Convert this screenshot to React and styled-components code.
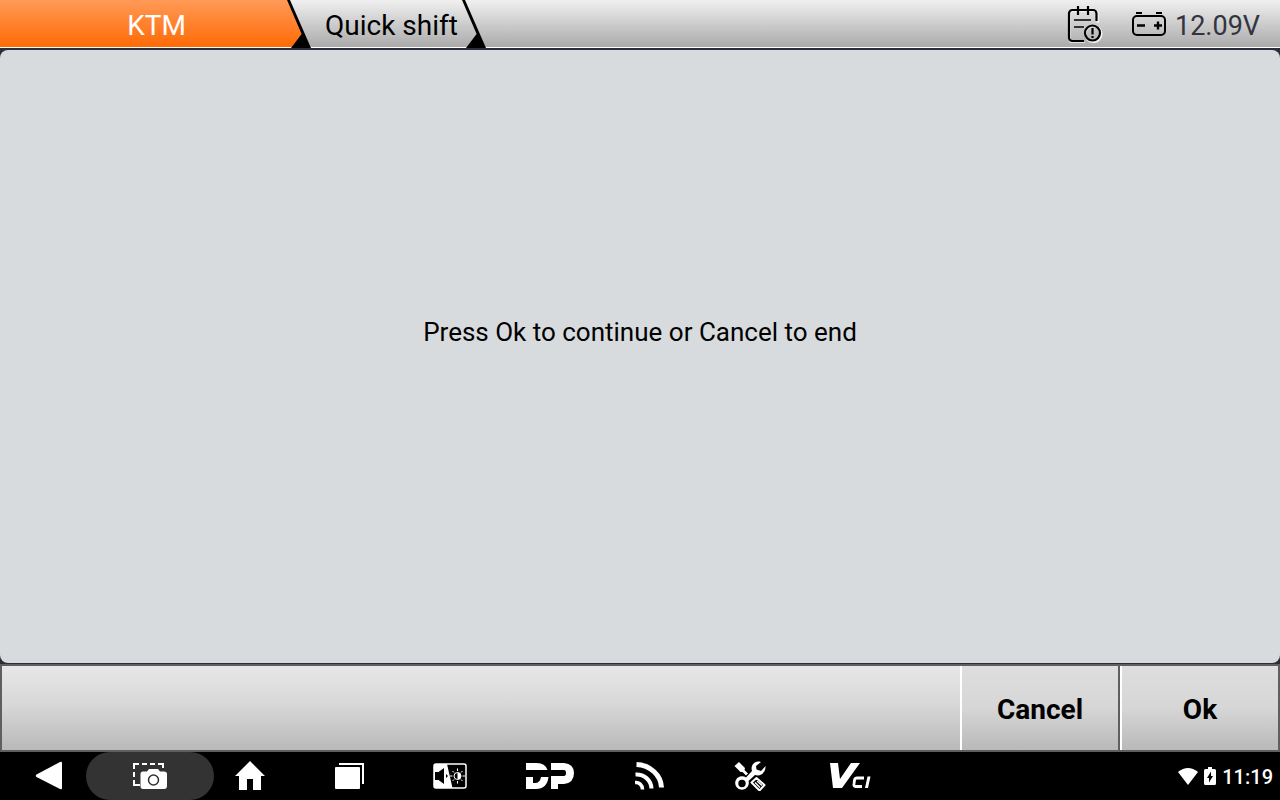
import React, { useState } from 'react'
import styled, { createGlobalStyle, css } from 'styled-components'

const GlobalStyle = createGlobalStyle`
    * {
        box-sizing: border-box;
    }
    body {
        margin: 0;
        background: #2b2d3a;
        font-family: Roboto, sans-serif;
        color: #000;
    }
    button {
        margin: 0;
        padding: 0;
        border: 0;
        background: none;
        font: inherit;
        color: inherit;
        cursor: pointer;
    }
    svg {
        display: block;
        flex: none;
    }
`

const Screen = styled.div`
    display: flex;
    flex-direction: column;
    min-height: 100vh;
`

// Top bar
const TopBar = styled.header`
    display: flex;
    justify-content: space-between;
    height: 48px;
    background:
        linear-gradient(#fff, #fff) bottom / 100% 1px no-repeat,
        linear-gradient(#f0f0f0, #a9a9a9);
`

const Tabs = styled.nav`
    display: flex;
`

const Tab = styled.button`
    height: 47px;
    padding: 5px 4px 0 14px;
    font-size: 28px;
    line-height: 42px;
    white-space: nowrap;

    ${({ $brand }) => $brand && css`
        width: 287px;
        padding: 5px 0 0 26px;
        color: #fff;
        background: linear-gradient(#ff9a57, #ff6a05);
    `}
`

const Status = styled.div`
    display: flex;
    align-items: center;
    padding-right: 20px;
`

const LogButton = styled.button`
    margin-right: 28px;
`

const Voltage = styled.div`
    display: flex;
    align-items: center;
    gap: 8px;
    font-size: 27px;
    line-height: 44px;
    color: #33343f;

    span {
        padding-top: 3px;
    }
`

// Message area
const Panel = styled.main`
    flex: 1;
    display: flex;
    align-items: center;
    justify-content: center;
    margin: 2px 0 1px;
    padding: 0 16px 50px;
    border-radius: 8px;
    background: #d7dbde;
`

const Message = styled.p`
    margin: 0;
    font-size: 26px;
    line-height: 36px;
    text-align: center;
`

// Bottom actions
const Actions = styled.footer`
    display: flex;
    justify-content: flex-end;
    height: 88px;
    border: 2px solid #5f5f5f;
    background: linear-gradient(#e7e7e7, #d8d8d8 45%, #b9b9b9);
`

const ActionButton = styled.button`
    width: 158px;
    padding-top: 2px;
    border-left: 2px solid #fff;
    background: linear-gradient(#dedede, #d6d6d6 50%, #b9b9b9);
    font-size: 28px;
    font-weight: 700;

    & + & {
        box-shadow: -2px 0 0 #5f5f5f;
        margin-left: 2px;
    }
`

// System navigation
const SystemBar = styled.nav`
    display: flex;
    justify-content: space-between;
    height: 48px;
    background: #000;
    color: #fff;
`

const NavItems = styled.div`
    display: flex;
`

const NavButton = styled.button`
    display: flex;
    align-items: center;
    justify-content: center;
    width: 100px;

    ${({ $pressed }) => $pressed && css`
        width: 128px;
        margin: 0 -14px;
        border-radius: 24px;
        background: #333;
    `}
`

const Clock = styled.div`
    display: flex;
    align-items: center;
    gap: 6px;
    padding: 2px 7px 0 0;
    font-size: 20px;
    font-weight: 500;

    svg {
        margin-bottom: 2px;
    }
`

const Separator = ({ brand }) => (
    <svg width="24" height="48" viewBox="0 0 24 48" aria-hidden="true">
        <defs>
            <linearGradient id="brandFade" gradientUnits="userSpaceOnUse" x1="0" y1="0" x2="0" y2="47">
                <stop offset="0" stopColor="#ff9a57" />
                <stop offset="1" stopColor="#ff6a05" />
            </linearGradient>
        </defs>
        {brand && <path d="M0 0H1L15 34 5 47H0Z" fill="url(#brandFade)" />}
        <path d="M0 0H3L24 48H4L14.6 34Z" />
    </svg>
)

const LogIcon = () => (
    <svg width="36" height="38" viewBox="0 0 36 38" fill="none" stroke="#000" strokeWidth="2.2">
        <path d="M17 37H5a3 3 0 0 1-3-3V8a3 3 0 0 1 3-3H27a3 3 0 0 1 3 3V17" stroke="#fff" transform="translate(1 1)" opacity=".6" />
        <path d="M17 36H5.500a3.500 3.500 0 0 1-3.500-3.500V8.500a3.500 3.500 0 0 1 3.500-3.500H26a3.500 3.500 0 0 1 3.500 3.500V16" />
        <path d="M11 1V10M21 1V10" />
        <path d="M7 15H24M7 22H17" stroke="#333" />
        <circle cx="26.500" cy="29" r="8" stroke="#fff" opacity=".8" />
        <circle cx="25.500" cy="28" r="7.500" />
        <path d="M25.500 23V29.500M25.500 31V33" />
    </svg>
)

const BatteryIcon = () => (
    <svg width="36" height="26" viewBox="0 0 36 26" fill="none" stroke="#000" strokeWidth="2">
        <path d="M5 2H11M25 2H31" />
        <rect x="2" y="5" width="32" height="19" rx="4" />
        <path d="M6 14.500H14M23 14.500H31M27 10.500V18.500" strokeWidth="2.400" />
    </svg>
)

const BackIcon = () => (
    <svg width="30" height="30" viewBox="0 0 30 30" fill="currentColor">
        <path d="M1.500 13.500 25 1Q27 0 27 2V27Q27 29 25 28L1.500 16Q0 15 1.500 13.500Z" />
    </svg>
)

const CameraIcon = () => (
    <svg width="36" height="28" viewBox="0 0 36 28" fill="currentColor">
        <path d="M2 7V2H7M10 2H15M18 2H23M26 2H31V6M2 10V15M2 18V23H8" fill="none" stroke="currentColor" strokeWidth="2" />
        <path d="M11 9.500H15L17 7H26L28 9.500H32Q35 9.500 35 12V24Q35 27 32 27H11Q8.500 27 8.500 24V12Q8.500 9.500 11 9.500Z" />
        <circle cx="21.500" cy="18" r="5" fill="none" stroke="#333" strokeWidth="1.500" />
    </svg>
)

const HomeIcon = () => (
    <svg width="30" height="30" viewBox="0 0 30 30" fill="currentColor">
        <path d="M15 0 30 15H26V29H18V18H12V29H4V15H0Z" />
    </svg>
)

const RecentsIcon = () => (
    <svg width="30" height="26" viewBox="0 0 30 26" fill="currentColor">
        <rect x="0" y="4" width="25" height="22" rx="1" />
        <path d="M4 1H28V21" fill="none" stroke="currentColor" strokeWidth="2" />
    </svg>
)

const SoundLightIcon = () => (
    <svg width="34" height="26" viewBox="0 0 34 26">
        <rect x="1" y="1" width="32" height="24" rx="2" fill="#000" stroke="#fff" strokeWidth="1.500" />
        <path d="M1 1H14L19.500 25H1Z" fill="#fff" />
        <path d="M2 9H5.500L11 5V21L5.500 17H2ZM13 11 15 13 13 15Z" fill="#000" />
        <circle cx="24.500" cy="13" r="3.500" fill="none" stroke="#fff" />
        <path d="M24.500 9.500a3.500 3.500 0 0 1 0 7Z" fill="#fff" />
        <path d="M24.500 5.500V8M24.500 18V20.500M17 13H19.500M29.500 13H32M19.500 8 21 9.500M28 16.500 29.500 18M29.500 8 28 9.500M21 16.500 19.500 18" stroke="#fff" />
    </svg>
)

const DpIcon = () => (
    <svg width="48" height="28" viewBox="0 0 48 28" fill="currentColor">
        <path d="M0 1H11Q19 1 21.500 8H0Z" />
        <path d="M0 15H7V21H9Q14 21 15 15H22.500Q21 27 10 27H0Z" />
        <path d="M25 1H38Q48 2 48 11Q48 21 38 22H32V27H25V14H38Q40 14 40 11Q40 8 38 8H25Z" />
    </svg>
)

const FeedIcon = () => (
    <svg width="30" height="28" viewBox="0 0 30 28" fill="none" stroke="currentColor" strokeWidth="5">
        <path d="M1.500 2.500C15 3 26 13 26.500 25.500" />
        <path d="M.5 12.500C9 12 16 18 16.500 26.500" strokeWidth="4" />
        <path d="M0 20.500C4 20 7.500 23 7.500 27.500" strokeWidth="3.500" />
    </svg>
)

const ToolsIcon = () => (
    <svg width="34" height="30" viewBox="0 0 34 30" fill="currentColor">
        <path d="M1.500 5 6 1 12 7 11.500 9 15 12.500 13 14.500 9.500 11 7.500 11Z" />
        <path d="M28 1C22-1 17 4 19 10L13 16.500A6.800 6.800 0 1 0 15.500 20L22 14C28 16 33 11 32.500 5L28 10 23.500 8.500 23 5Z" />
        <circle cx="9" cy="22.500" r="3.700" fill="#000" />
        <path d="M18.500 21.500 23.500 17 31.500 24 26.500 29.500Z" fill="none" stroke="currentColor" strokeWidth="2" strokeLinejoin="round" />
        <path d="M22 21.500 27 26.500M24 20 29 24.500" stroke="currentColor" strokeWidth="1.400" />
    </svg>
)

const VciIcon = () => (
    <svg width="42" height="26" viewBox="0 0 42 26" fill="currentColor">
        <path d="M1 0H9L11 16 22 0H31L13 25H4Z" />
        <path d="M35 15H28Q26 15 25.500 17L25 21Q24.500 23.500 26.500 23.500H33" fill="none" stroke="currentColor" strokeWidth="2.800" />
        <path d="M38.500 13.500H41.500L39 25H36Z" />
    </svg>
)

const WifiIcon = () => (
    <svg width="20" height="17" viewBox="0 0 20 17" fill="currentColor">
        <path d="M0 4Q10-4 20 4L10 17Z" />
    </svg>
)

const ChargeIcon = () => (
    <svg width="12" height="18" viewBox="0 0 12 18" fill="currentColor">
        <path d="M4 0H8V2H10.500Q12 2 12 3.500V16.500Q12 18 10.500 18H1.500Q0 18 0 16.500V3.500Q0 2 1.500 2H4Z" />
        <path d="M7 4.500V9H9L5 15.500V11H3Z" fill="#000" />
    </svg>
)

const navItems = [
    { name: 'Back', icon: BackIcon },
    { name: 'Screenshot', icon: CameraIcon },
    { name: 'Home', icon: HomeIcon },
    { name: 'Recent apps', icon: RecentsIcon },
    { name: 'Sound and brightness', icon: SoundLightIcon },
    { name: 'DP', icon: DpIcon },
    { name: 'Feed', icon: FeedIcon },
    { name: 'Tools', icon: ToolsIcon },
    { name: 'VCI', icon: VciIcon },
]

const App = () => {
    const [pressed, setPressed] = useState('Screenshot')

    return (
        <Screen>
            <GlobalStyle />
            <TopBar>
                <Tabs>
                    <Tab $brand>KTM</Tab>
                    <Separator brand />
                    <Tab>Quick shift</Tab>
                    <Separator />
                </Tabs>
                <Status>
                    <LogButton aria-label="Data log"><LogIcon /></LogButton>
                    <Voltage>
                        <BatteryIcon />
                        <span>12.09V</span>
                    </Voltage>
                </Status>
            </TopBar>

            <Panel>
                <Message>Press Ok to continue or Cancel to end</Message>
            </Panel>

            <Actions>
                <ActionButton>Cancel</ActionButton>
                <ActionButton>Ok</ActionButton>
            </Actions>

            <SystemBar>
                <NavItems>
                    {navItems.map(({ name, icon: Icon }) => (
                        <NavButton
                            key={name}
                            aria-label={name}
                            $pressed={pressed === name}
                            onClick={() => setPressed(name)}
                        >
                            <Icon />
                        </NavButton>
                    ))}
                </NavItems>
                <Clock>
                    <WifiIcon />
                    <ChargeIcon />
                    <span>11:19</span>
                </Clock>
            </SystemBar>
        </Screen>
    )
}

export default App
